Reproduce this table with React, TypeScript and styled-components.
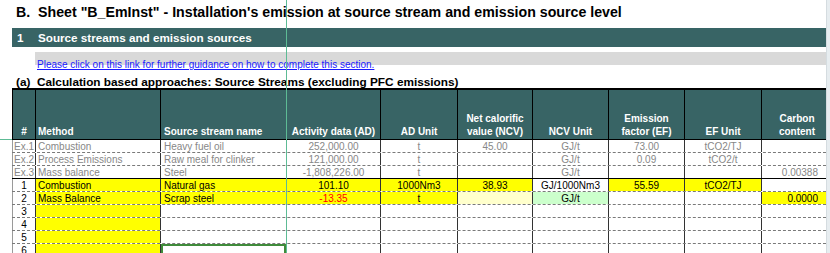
import React from "react";
import styled, { createGlobalStyle, css } from "styled-components";

const Global = createGlobalStyle`
  html, body { margin: 0; padding: 0; background: #ffffff; }
  body { font-family: "Liberation Sans", Arial, sans-serif; }
`;

const TEAL = "#386465";
const FREEZE = "#5dbb95";

type Align = "left" | "center" | "right";
type Fill = "yellow" | "lightYellow" | "lightGreen" | undefined;

const COLS: { w: number; align: Align; pad: string }[] = [
  { w: 23, align: "center", pad: "0" },
  { w: 125, align: "left", pad: "0 0 0 2px" },
  { w: 126, align: "left", pad: "0 0 0 3px" },
  { w: 94, align: "center", pad: "0" },
  { w: 77, align: "center", pad: "0" },
  { w: 75, align: "center", pad: "0" },
  { w: 76, align: "center", pad: "0" },
  { w: 76, align: "center", pad: "0" },
  { w: 77, align: "center", pad: "0" },
  { w: 65, align: "right", pad: "0 8px 0 0" },
];

const GRID = COLS.map((c) => `${c.w}px`).join(" ");

const Page = styled.div`
  position: relative;
  display: flex;
  width: 830px;
  height: 253px;
  overflow: hidden;
`;

const Sheet = styled.div`
  width: 826px;
  flex: none;
  display: flex;
  flex-direction: column;
`;

const Gutter = styled.div`
  flex: 1;
  background: #e7edf0;
  border-left: 1px solid #d5dce0;
`;

const Title = styled.div`
  height: 24px;
  line-height: 24px;
  padding-left: 16px;
  font-size: 14.2px;
  font-weight: bold;
  color: #000;
  white-space: nowrap;
  margin-bottom: 4px;
`;

const SectionBar = styled.div`
  margin-left: 12px;
  height: 19px;
  line-height: 19px;
  background: ${TEAL};
  color: #fff;
  font-size: 11.7px;
  font-weight: bold;
  display: flex;
`;

const SectionNum = styled.span`
  width: 21px;
  padding-left: 5px;
`;

const LinkBar = styled.div`
  margin: 5px 0 0 35px;
  height: 13px;
  box-sizing: border-box;
  padding: 4px 0 0 2px;
  line-height: 13px;
  background: #d9d9d9;
  white-space: nowrap;
`;

const GuidanceLink = styled.a`
  color: #1a1aff;
  font-size: 10px;
  text-decoration: underline;
`;

const SubHeading = styled.div`
  height: 23px;
  box-sizing: border-box;
  padding: 11px 0 0 16px;
  line-height: 12px;
  font-size: 11.8px;
  font-weight: bold;
  white-space: nowrap;
`;

const Table = styled.div`
  margin-left: 12px;
  width: 814px;
`;

const HeaderRow = styled.div`
  display: grid;
  grid-template-columns: ${GRID};
  height: 52px;
  box-sizing: border-box;
  border-top: 2px solid #000;
  border-bottom: 1px solid #000;
  background: ${TEAL};
`;

const HeadCell = styled.div<{ $align: Align; $pad: string }>`
  display: flex;
  flex-direction: column;
  justify-content: flex-end;
  align-items: ${(p) =>
    p.$align === "left" ? "flex-start" : p.$align === "right" ? "flex-end" : "center"};
  text-align: ${(p) => p.$align};
  padding: ${(p) => p.$pad};
  padding-bottom: 1px;
  border-left: 1px solid #000;
  color: #fff;
  font-size: 10px;
  font-weight: bold;
  line-height: 13px;
  white-space: nowrap;
`;

const Row = styled.div<{ $bottom: "dashed" | "solid" }>`
  display: grid;
  grid-template-columns: ${GRID};
  height: 13px;
  flex: none;
  box-sizing: border-box;
  border-bottom: ${(p) => (p.$bottom === "solid" ? "1px solid #000" : "1px dashed #7a7a7a")};
`;

const fillColor = (f: Fill) =>
  f === "yellow" ? "#ffff00" : f === "lightYellow" ? "#ffffcc" : f === "lightGreen" ? "#ccffcc" : "#ffffff";

const Cell = styled.div<{
  $align: Align;
  $pad: string;
  $fill: Fill;
  $muted: boolean;
  $red: boolean;
  $first: boolean;
  $selected: boolean;
}>`
  box-sizing: border-box;
  border-left: 1px solid ${(p) => (p.$first ? "#9a9a9a" : "#333")};
  background: ${(p) => fillColor(p.$fill)};
  color: ${(p) => (p.$red ? "#ff0000" : p.$muted ? "#878787" : "#000")};
  text-align: ${(p) => p.$align};
  padding: ${(p) => p.$pad};
  font-size: 10px;
  line-height: 13px;
  white-space: nowrap;
  overflow: hidden;
  ${(p) =>
    p.$selected &&
    css`
      box-shadow: inset 0 0 0 2px #3f8b3a;
    `}
`;

const FreezeV = styled.div`
  position: absolute;
  left: 286px;
  top: 0;
  bottom: 0;
  width: 1px;
  background: ${FREEZE};
`;

const FreezeH = styled.div`
  position: absolute;
  left: 0;
  top: 139px;
  width: 12px;
  height: 1px;
  background: ${FREEZE};
`;

const HEADERS = [
  ["#"],
  ["Method"],
  ["Source stream name"],
  ["Activity data (AD)"],
  ["AD Unit"],
  ["Net calorific", "value (NCV)"],
  ["NCV Unit"],
  ["Emission", "factor (EF)"],
  ["EF Unit"],
  ["Carbon", "content"],
];

const HEAD_PAD = ["0", "0 0 0 2px", "0 0 0 3px", "0", "0", "0", "0", "0", "0", "0 0 0 6px"];
const HEAD_ALIGN: Align[] = ["center", "left", "left", "center", "center", "center", "center", "center", "center", "center"];

type RowData = {
  cells: string[];
  fills?: Fill[];
  muted?: boolean;
  red?: number[];
  bottom?: "dashed" | "solid";
  selected?: number;
};

const Y: Fill = "yellow";
const methodOnly: Fill[] = [undefined, Y];

const ROWS: RowData[] = [
  {
    cells: ["Ex.1", "Combustion", "Heavy fuel oil", "252,000.00", "t", "45.00", "GJ/t", "73.00", "tCO2/TJ", ""],
    muted: true,
  },
  {
    cells: ["Ex.2", "Process Emissions", "Raw meal for clinker", "121,000.00", "t", "", "GJ/t", "0.09", "tCO2/t", ""],
    muted: true,
  },
  {
    cells: ["Ex.3", "Mass balance", "Steel", "-1,808,226.00", "t", "", "GJ/t", "", "", "0.00388"],
    muted: true,
    bottom: "solid",
  },
  {
    cells: ["1", "Combustion", "Natural gas", "101.10", "1000Nm3", "38.93", "GJ/1000Nm3", "55.59", "tCO2/TJ", ""],
    fills: [undefined, Y, Y, Y, Y, Y, undefined, Y, Y, undefined],
  },
  {
    cells: ["2", "Mass Balance", "Scrap steel", "-13.35", "t", "", "GJ/t", "", "", "0.0000"],
    fills: [undefined, Y, Y, Y, Y, "lightYellow", "lightGreen", undefined, undefined, Y],
    red: [3],
  },
  { cells: ["3", "", "", "", "", "", "", "", "", ""], fills: methodOnly },
  { cells: ["4", "", "", "", "", "", "", "", "", ""], fills: methodOnly },
  { cells: ["5", "", "", "", "", "", "", "", "", ""], fills: methodOnly },
  { cells: ["6", "", "", "", "", "", "", "", "", ""], fills: methodOnly, selected: 2 },
];

export default function App() {
  return (
    <>
      <Global />
      <Page>
        <Sheet>
          <Title>B.&nbsp;&nbsp;Sheet "B_EmInst" - Installation's emission at source stream and emission source level</Title>
          <SectionBar>
            <SectionNum>1</SectionNum>
            <span>Source streams and emission sources</span>
          </SectionBar>
          <LinkBar>
            <GuidanceLink href="#">Please click on this link for further guidance on how to complete this section.</GuidanceLink>
          </LinkBar>
          <SubHeading>(a)&nbsp;&nbsp;Calculation based approaches: Source Streams (excluding PFC emissions)</SubHeading>
          <Table>
            <HeaderRow>
              {HEADERS.map((lines, i) => (
                <HeadCell key={i} $align={HEAD_ALIGN[i]} $pad={HEAD_PAD[i]}>
                  {lines.map((l) => (
                    <span key={l}>{l}</span>
                  ))}
                </HeadCell>
              ))}
            </HeaderRow>
            {ROWS.map((r, ri) => (
              <Row key={ri} $bottom={r.bottom ?? "dashed"}>
                {r.cells.map((c, ci) => (
                  <Cell
                    key={ci}
                    $align={COLS[ci].align}
                    $pad={COLS[ci].pad}
                    $fill={r.fills?.[ci]}
                    $muted={!!r.muted}
                    $red={!!r.red?.includes(ci)}
                    $first={ci === 0}
                    $selected={r.selected === ci}
                  >
                    {c}
                  </Cell>
                ))}
              </Row>
            ))}
          </Table>
        </Sheet>
        <Gutter />
        <FreezeV />
        <FreezeH />
      </Page>
    </>
  );
}
